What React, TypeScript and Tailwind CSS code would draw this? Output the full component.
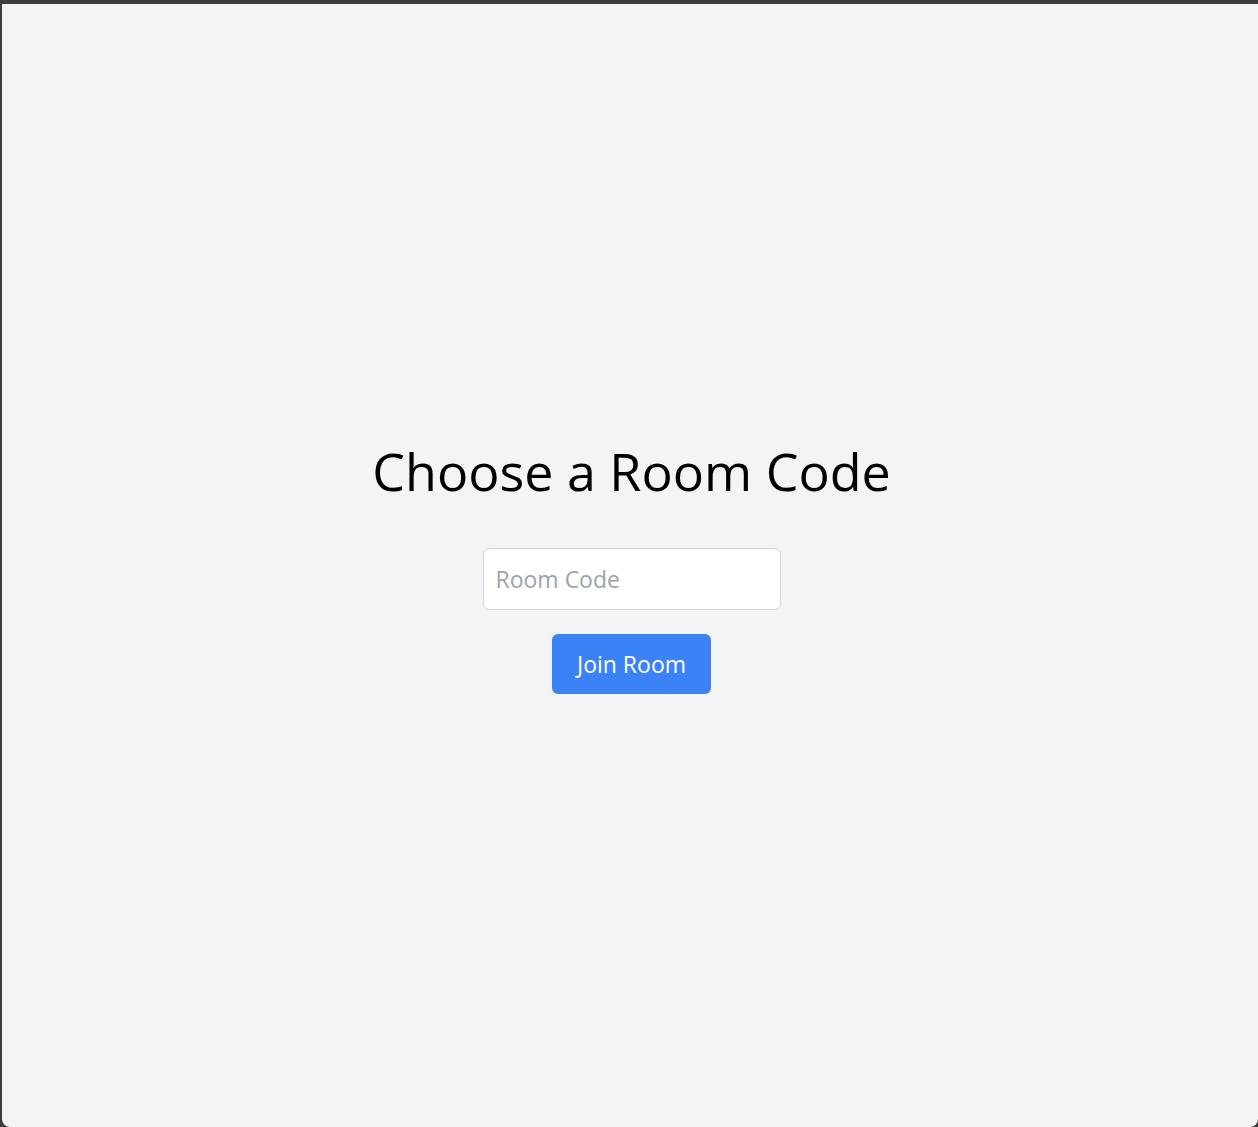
import { useState } from 'react'

export default function App() {
  const [code, setCode] = useState('')

  return (
    <div className="h-[1127px] w-full bg-[#3c3c3c] pt-[4px] pl-[2px]">
      <div className="flex h-full flex-col items-center justify-center rounded-b-lg bg-[#f3f4f6] pt-[4px] pl-[3px] font-['Open_Sans',sans-serif]">
        <h1 className="mb-[47px] text-[52px] leading-[60px] text-black">Choose a Room Code</h1>
        <input
          type="text"
          value={code}
          onChange={(e) => setCode(e.target.value)}
          placeholder="Room Code"
          className="h-[62px] w-[298px] rounded-md border border-[#d1d5db] bg-white px-3 text-[23px] text-gray-900 placeholder:text-[#9ca3af] focus:outline-none"
        />
        <button className="mt-[24px] h-[60px] w-[159px] rounded-md bg-[#3b82f6] text-[23px] text-white">
          Join Room
        </button>
      </div>
    </div>
  )
}
